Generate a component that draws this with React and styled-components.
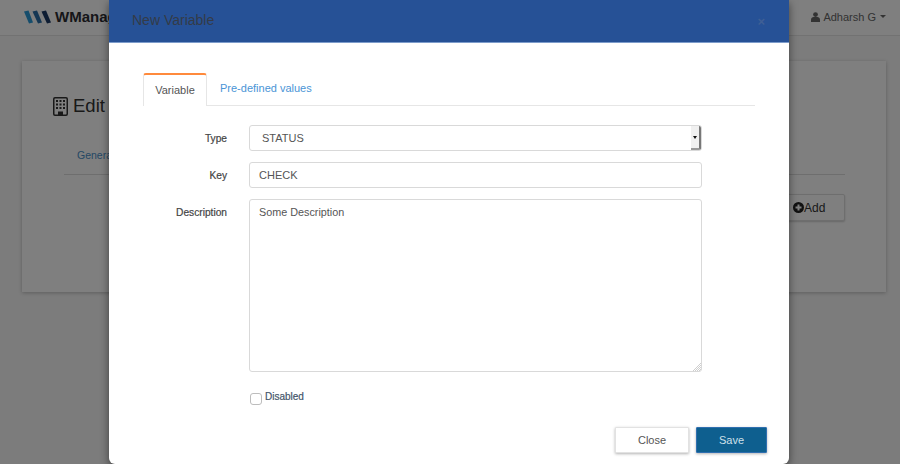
import React from 'react';
import styled, { createGlobalStyle } from 'styled-components';

const Global = createGlobalStyle`
  html, body { margin: 0; padding: 0; background: #7f7f7f; overflow: hidden; }
  * { box-sizing: border-box; }
  body { font-family: "Liberation Sans", Arial, sans-serif; }
`;
const Page = styled.div`
  position: relative; width: 900px; height: 464px; overflow: hidden; background: #fff;
`;
const Navbar = styled.header`
  height: 36px; display: flex; align-items: center; justify-content: space-between;
  padding: 0 14px 2px 24px; background: #fff; border-bottom: 1px solid #e4e4e4;
`;
const Brand = styled.div`
  display: flex; align-items: center; gap: 4px; font-size: 15px; font-weight: 700; color: #2c2c33;
`;
const UserMenu = styled.div`
  display: flex; align-items: center; gap: 3px; font-size: 11px; color: #666;
`;
const Caret = styled.span`
  margin-left: 1px; width: 0; height: 0;
  border-left: 3px solid transparent; border-right: 3px solid transparent; border-top: 3px solid #666;
`;
const Main = styled.main`
  padding: 25px 14px 0 22px; background: #f9f9f9; height: 428px;
`;
const Card = styled.section`
  height: 231px; background: #fff; padding: 31px 41px 0 42px;
  box-shadow: 0 1px 4px rgba(0,0,0,.25);
`;
const CardTitle = styled.h1`
  margin: 0 0 0 -11px; display: flex; align-items: center; gap: 5px; height: 28px;
  font-size: 18.5px; font-weight: 400; color: #333;
`;
const CardTabs = styled.div`
  margin-top: 25px; height: 30px; padding-left: 13px; border-bottom: 1px solid #ddd;
  font-size: 10.5px; color: #4a8fc8; line-height: 20px;
`;
const CardActions = styled.div`
  display: flex; justify-content: flex-end; margin-top: 19px;
`;
const AddButton = styled.button`
  width: 90px; height: 27px; padding: 0 0 0 37px; display: flex; align-items: center;
  border: 1px solid #ddd; border-radius: 2px; background: #fff; color: #333;
  font: 12px "Liberation Sans", sans-serif; box-shadow: 0 1px 2px rgba(0,0,0,.2);
`;
const Backdrop = styled.div`
  position: absolute; inset: 0; background: rgba(0,0,0,.5);
`;
const Modal = styled.div`
  position: absolute; left: 109px; top: 0; width: 680px; height: 464px; background: #fff;
  border-radius: 0 0 6px 6px; box-shadow: 0 3px 9px rgba(0,0,0,.5);
  display: flex; flex-direction: column;
`;
const ModalHeader = styled.div`
  flex: none; height: 43px; padding: 0 24px 3px 23px; display: flex; align-items: center;
  justify-content: space-between; background: #265196; border-bottom: 1px solid #7d9ccb;
`;
const ModalTitle = styled.h4`
  margin: 0; font-size: 14px; font-weight: 400; color: #343b47;
`;
const CloseX = styled.span`
  font-size: 13px; color: #3f5f95; font-weight: 700; line-height: 1; margin-top: 3px;
`;
const ModalBody = styled.div`
  flex: 1; padding: 30px 34px 0;
`;
const Tabs = styled.div`
  display: flex; height: 33px; border-bottom: 1px solid #e6e6e6; width: 612px;
`;
const Tab = styled.div`
  height: 33px; font-size: 11px; display: flex; justify-content: center;
  ${p => p.$active ? `
    width: 64px; border: 1px solid #e6e6e6; border-top: 2px solid #ff8a3c; border-bottom: 0;
    border-radius: 3px 3px 0 0; background: #fff; color: #555; padding-top: 9px;
  ` : `
    margin-left: 13px; color: #4a95d6; padding-top: 9px;
  `}
`;
const Form = styled.div`
  margin-top: 19px; display: grid; grid-template-columns: 84px 453px; column-gap: 22px; row-gap: 11px;
`;
const Label = styled.label`
  font-size: 10.2px; color: #444; text-align: right; padding-top: 8px; font-weight: 400;
  -webkit-text-stroke: .2px #444;
`;
const fieldCss = `
  border: 1px solid #d9d9d9; border-radius: 3px; background: #fff; color: #555;
  font: 11px "Liberation Sans", sans-serif; outline: none; width: 100%;
`;
const SelectBox = styled.div`
  ${fieldCss}
  height: 26px; display: flex; align-items: center; justify-content: space-between; padding-left: 12px;
  overflow: hidden;
`;
const SelectArrow = styled.span`
  width: 10px; height: 24px; background: #f0f0f0; display: flex; align-items: center; justify-content: center;
  border-right: 2px solid #777; border-bottom: 2px solid #999;
  &::after {
    content: ""; width: 0; height: 0; border-left: 2.5px solid transparent;
    border-right: 2.5px solid transparent; border-top: 3px solid #111;
  }
`;
const TextInput = styled.input`
  ${fieldCss}
  height: 26px; padding: 0 9px;
`;
const TextArea = styled.textarea`
  ${fieldCss}
  height: 173px; padding: 6px 9px; display: block; resize: vertical; font-size: 10.8px;
  &::-webkit-resizer {
    background:
      linear-gradient(135deg, #fff 72%, transparent 72%),
      conic-gradient(#cfcfcf 25%, transparent 0 50%, #cfcfcf 0 75%, transparent 0) 0 0 / 2px 2px;
  }
`;
const CheckRow = styled.div`
  grid-column: 2; display: flex; align-items: flex-start; gap: 3px; margin-top: 7px; height: 20px;
`;
const CheckBox = styled.input`
  appearance: none; margin: 3px 0 0 1px; width: 12px; height: 12px; background: #fff;
  border: 1.5px solid #bdbdbd; border-radius: 3px;
`;
const CheckLabel = styled.label`
  font-size: 10px; color: #44556a; line-height: 14px; -webkit-text-stroke: .2px #44556a;
`;
const Footer = styled.div`
  display: flex; justify-content: flex-end; gap: 7px; padding: 0 22px 11px 0;
`;
const Button = styled.button`
  height: 26px; width: ${p => p.$primary ? 71 : 74}px; border-radius: 1px;
  font: 11px "Liberation Sans", sans-serif; box-shadow: 0 1px 3px rgba(0,0,0,.3);
  border: 1px solid ${p => p.$primary ? '#2f6fb0' : '#e2e2e2'};
  background: ${p => p.$primary ? '#0e5f8f' : '#fff'};
  color: ${p => p.$primary ? '#cfe0ea' : '#555'};
`;

const Logo = () => (
  <svg width="27" height="14" viewBox="0 0 27 14">
    <path d="M0 1.5 4.5.5 9 12.5 5 13.5z" fill="#2a9ad8" />
    <path d="M8.5 1.5 13 .5 18 12.5 14 13.5z" fill="#2a6ea8" />
    <path d="M17.5 1.5 22 .5 27 12.5 23 13.5z" fill="#1d3a66" />
  </svg>
);
const UserIcon = () => (
  <svg width="9" height="10" viewBox="0 0 9 10">
    <circle cx="4.5" cy="2.6" r="2.4" fill="#666" />
    <path d="M0 10V7.5C0 6 1.3 5 2.5 5h4C7.7 5 9 6 9 7.5V10z" fill="#666" />
  </svg>
);
const BuildingIcon = () => (
  <svg width="15" height="19" viewBox="0 0 15 19">
    <rect x=".75" y=".75" width="13.5" height="17.5" rx="1.2" fill="none" stroke="#333" strokeWidth="1.5" />
    <path d="M3 3h2v2H3zM6.5 3h2v2h-2zM10 3h2v2h-2zM3 6.5h2v2H3zM6.5 6.5h2v2h-2zM10 6.5h2v2h-2zM3 10h2v2H3zM6.5 10h2v2h-2zM10 10h2v2h-2zM5 14.5h5V18H5z" fill="#333" />
  </svg>
);
const PlusCircle = () => (
  <svg width="11" height="11" viewBox="0 0 11 11">
    <circle cx="5.5" cy="5.5" r="5.5" fill="#222" />
    <path d="M4.5 2.5h2v2h2v2h-2v2h-2v-2h-2v-2h2z" fill="#fff" />
  </svg>
);

export default function App() {
  return (
    <Page>
      <Global />
      <Navbar>
        <Brand><Logo />WManager</Brand>
        <UserMenu><UserIcon />Adharsh G<Caret /></UserMenu>
      </Navbar>
      <Main>
        <Card>
          <CardTitle><BuildingIcon />Edit</CardTitle>
          <CardTabs>General</CardTabs>
          <CardActions><AddButton><PlusCircle />Add</AddButton></CardActions>
        </Card>
      </Main>
      <Backdrop />
      <Modal>
        <ModalHeader>
          <ModalTitle>New Variable</ModalTitle>
          <CloseX>×</CloseX>
        </ModalHeader>
        <ModalBody>
          <Tabs>
            <Tab $active>Variable</Tab>
            <Tab>Pre-defined values</Tab>
          </Tabs>
          <Form>
            <Label>Type</Label>
            <SelectBox>STATUS<SelectArrow /></SelectBox>
            <Label>Key</Label>
            <TextInput defaultValue="CHECK" />
            <Label>Description</Label>
            <TextArea defaultValue="Some Description" />
            <CheckRow>
              <CheckBox type="checkbox" />
              <CheckLabel>Disabled</CheckLabel>
            </CheckRow>
          </Form>
        </ModalBody>
        <Footer>
          <Button>Close</Button>
          <Button $primary>Save</Button>
        </Footer>
      </Modal>
    </Page>
  );
}
